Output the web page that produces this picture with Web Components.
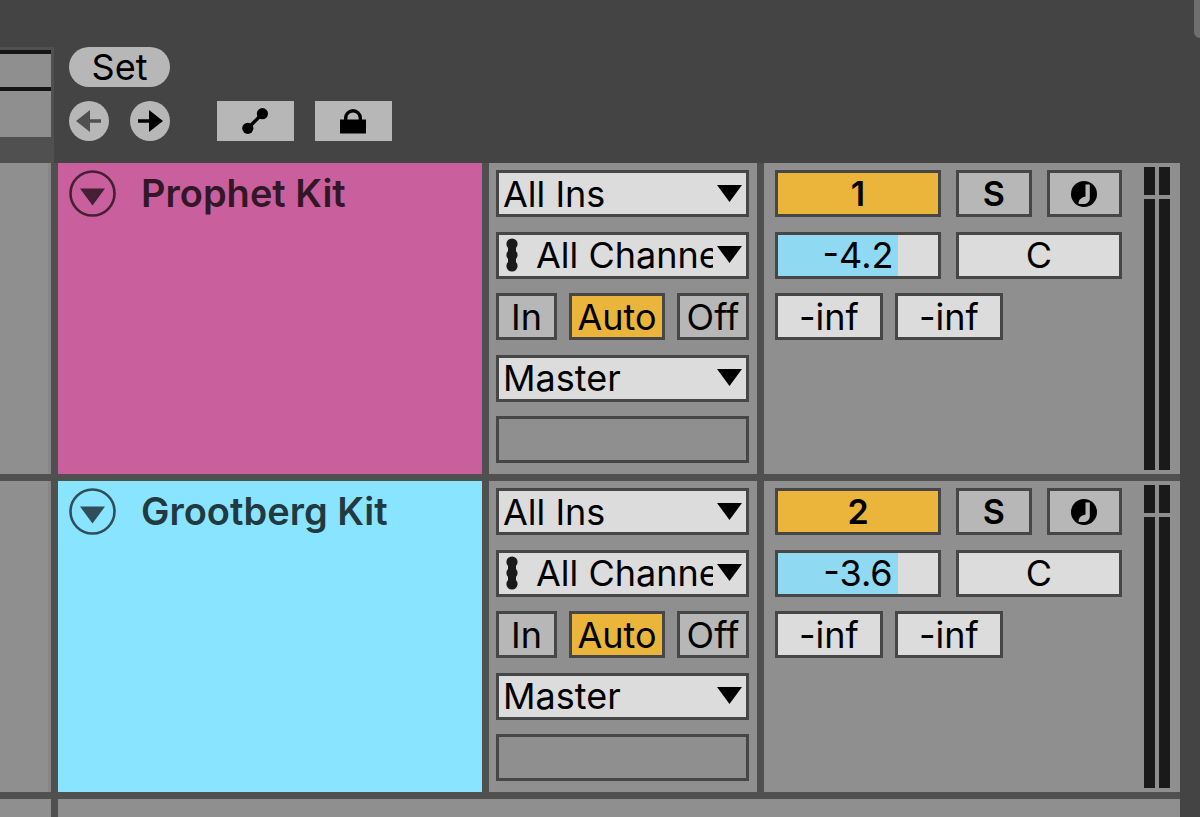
<!DOCTYPE html>
<html lang="en">
<head>
<meta charset="utf-8">
<meta name="viewport" content="width=device-width, initial-scale=1">
<title>Arrangement</title>
<style>
  :root {
    --bg: #444444;
    --line: #505050;
    --panel: #8f8f8f;
    --frame: #464646;
    --button: #b7b7b7;
    --field: #dcdcdc;
    --accent: #ebb53c;
    --level: #8fd9f3;
  }

  body {
    margin: 0;
    background: var(--bg);
    color: #000;
    font-family: Inter, "Liberation Sans", sans-serif;
    font-size: 36px;
    line-height: 40px;
  }
</style>
</head>
<body>
<arrangement-view>
  <locator-bar slot="header"></locator-bar>
  <track-row name="Prophet Kit" number="1" color="#c95f9d" volume="-4.2"></track-row>
  <track-row name="Grootberg Kit" number="2" color="#89e4ff" volume="-3.6"></track-row>
</arrangement-view>

<script>
/**
 * Base class: every component renders its template into an open shadow root
 */
class LiveElement extends HTMLElement {
  constructor() {
    super();
    this.attachShadow({ mode: 'open' });
  }

  connectedCallback() {
    this.shadowRoot.innerHTML = this.template();
  }

  attr(name, fallback = '') {
    return this.getAttribute(name) || fallback;
  }
}

/**
 * Page frame: header on top, tracks below, empty lane down to the window edge
 */
class ArrangementView extends LiveElement {
  template() {
    return `
      <style>
        :host {
          display: flex;
          flex-direction: column;
          height: 100vh;
          overflow: hidden;
        }

        main {
          display: flex;
          flex: 1;
          flex-direction: column;
          gap: 7px;
          margin-right: 20px;
          background: var(--line);
        }

        .rest {
          display: grid;
          grid-template-columns: 51px 1fr;
          gap: 7px;
          flex: 1;
        }

        .rest div {
          background: var(--panel);
        }
      </style>

      <slot name="header"></slot>
      <main>
        <slot></slot>
        <div class="rest"><div></div><div></div></div>
      </main>
    `;
  }
}

/**
 * Locator controls and the end of the overview strip
 */
class LocatorBar extends LiveElement {
  template() {
    return `
      <style>
        :host {
          display: flex;
          height: 163px;
        }

        .overview {
          box-sizing: border-box;
          width: 54px;
          margin-top: 47px;
          padding: 3px 3px 0 0;
          background: var(--line);
        }

        .beat, .scrub {
          box-sizing: border-box;
          background: var(--panel);
          border-top: 4px solid #141414;
        }

        .beat { height: 37px; }
        .scrub { height: 50px; }

        .controls {
          display: flex;
          flex: 1;
          flex-direction: column;
          align-items: flex-start;
          gap: 14px;
          padding: 47px 0 0 15px;
        }

        .row {
          display: flex;
          gap: 21px;
        }

        .tools {
          display: flex;
          gap: 21px;
          margin-left: 26px;
        }

        button {
          display: block;
          height: 40px;
          padding: 0;
          border: 0;
          background: var(--button);
          color: inherit;
          font: inherit;
        }

        button:disabled { color: #505050; }

        .set {
          width: 101px;
          border-radius: 20px;
        }

        .round {
          width: 40px;
          border-radius: 50%;
        }

        .tool { width: 77px; }

        svg {
          display: block;
          fill: currentColor;
        }

        .scroll {
          width: 6px;
          height: 38px;
          border-radius: 0 0 0 6px;
          background: #6f6f6f;
        }
      </style>

      <div class="overview">
        <div class="beat"></div>
        <div class="scrub"></div>
      </div>
      <div class="controls">
        <button class="set">Set</button>
        <div class="row">
          <button class="round" aria-label="Previous locator" disabled>
            <svg width="40" height="40"><path d="M7 20 21 9v9.2h11v3.6H21V31z"/></svg>
          </button>
          <button class="round" aria-label="Next locator">
            <svg width="40" height="40"><path d="M33 20 19 9v9.2H8v3.6h11V31z"/></svg>
          </button>
          <div class="tools">
            <button class="tool" aria-label="Automation mode">
              <svg width="76" height="40">
                <circle cx="30.8" cy="27.3" r="5.6"/>
                <circle cx="45.4" cy="12.7" r="5.6"/>
                <path d="M30.8 27.3 45.4 12.7" stroke="currentColor" stroke-width="3.4"/>
              </svg>
            </button>
            <button class="tool" aria-label="Lock envelopes">
              <svg width="76" height="40">
                <path d="M25 18.5h26v14H25z"/>
                <path d="M30.7 19v-2a7.3 7.3 0 0 1 14.6 0v2" fill="none" stroke="currentColor" stroke-width="3.4"/>
              </svg>
            </button>
          </div>
        </div>
      </div>
      <div class="scroll"></div>
    `;
  }
}

/**
 * Drop-down with a frame, arrow and optional leading icon from the slot
 */
class LiveChooser extends LiveElement {
  template() {
    const value = this.attr('value');
    const label = this.attr('label');
    const empty = value === '';

    return `
      <style>
        :host {
          display: grid;
          grid-template-columns: minmax(0, 1fr);
          align-items: center;
        }

        select, .arrow, slot {
          grid-area: 1 / 1;
        }

        select {
          appearance: none;
          box-sizing: border-box;
          width: 100%;
          height: 47px;
          margin: 0;
          padding: 0 33px 0 ${this.hasAttribute('icon') ? 37 : 4}px;
          border: 3px solid var(--frame);
          border-radius: 0;
          background: ${empty ? 'transparent' : 'var(--field)'};
          color: inherit;
          font: inherit;
          opacity: 1;
        }

        .arrow {
          justify-self: end;
          margin-right: 7px;
          pointer-events: none;
        }

        slot {
          display: block;
          pointer-events: none;
        }
      </style>

      <select aria-label="${label}" ${empty ? 'disabled' : ''}>${empty ? '' : `<option>${value}</option>`}</select>
      <slot></slot>
      ${empty ? '' : '<svg class="arrow" width="25" height="18"><path d="M0 0h25L12.5 17z"/></svg>'}
    `;
  }
}

/**
 * Track title, colored, with fold button
 */
class TrackTitle extends LiveElement {
  template() {
    return `
      <style>
        :host {
          display: flex;
          align-items: flex-start;
          gap: 25px;
          min-width: 0;
          padding: 7px 11px;
          background: ${this.attr('color')};
        }

        button {
          flex: none;
          padding: 0;
          border: 0;
          background: none;
          color: rgba(0, 0, 0, 0.66);
        }

        svg { display: block; }

        h2 {
          margin: 0;
          color: rgba(0, 0, 0, 0.77);
          font-size: 38px;
          font-weight: 600;
          line-height: 47px;
          white-space: nowrap;
        }
      </style>

      <button aria-label="Unfold track">
        <svg width="47" height="47">
          <circle cx="23.5" cy="23.5" r="22" fill="none" stroke="currentColor" stroke-width="2.6"/>
          <path d="M11 18.5h25L23.5 35.5z" fill="currentColor"/>
        </svg>
      </button>
      <h2><slot></slot></h2>
    `;
  }
}

/**
 * Input and output routing column
 */
class TrackRouting extends LiveElement {
  template() {
    return `
      <style>
        :host {
          display: grid;
          box-sizing: border-box;
          grid-template-rows: repeat(5, 47px);
          align-content: space-between;
          padding: 7px 8px 11px 7px;
          background: var(--panel);
        }

        .monitor {
          display: grid;
          grid-template-columns: 61px 1fr 72px;
          gap: 12px;
        }

        button {
          padding: 0;
          border: 3px solid var(--frame);
          background: var(--button);
          color: inherit;
          font: inherit;
        }

        button[aria-pressed="true"] { background: var(--accent); }

        .dots {
          display: block;
          margin-left: 10px;
          fill: #1a1a1a;
        }
      </style>

      <live-chooser label="Input type" value="All Ins"></live-chooser>
      <live-chooser label="Input channel" value="All Channels" icon>
        <svg class="dots" width="12" height="34">
          <circle cx="6" cy="6" r="5.6"/>
          <circle cx="6" cy="17" r="5.6"/>
          <circle cx="6" cy="28" r="5.6"/>
          <path d="M2 6h8v22H2z"/>
        </svg>
      </live-chooser>
      <div class="monitor" role="group" aria-label="Monitor">
        <button aria-pressed="false">In</button>
        <button aria-pressed="true">Auto</button>
        <button aria-pressed="false">Off</button>
      </div>
      <live-chooser label="Output type" value="Master"></live-chooser>
      <live-chooser label="Output channel"></live-chooser>
    `;
  }
}

/**
 * Mixer column: activator, solo, arm, volume, pan, sends
 */
class TrackMixer extends LiveElement {
  template() {
    return `
      <style>
        :host {
          display: flex;
          box-sizing: border-box;
          gap: 22px;
          padding: 0 10px 0 11px;
          background: var(--panel);
        }

        .controls {
          display: grid;
          flex: 1;
          min-width: 0;
          grid-template-rows: repeat(5, 47px);
          align-content: space-between;
          padding: 7px 0 11px;
        }

        .row, .pair {
          display: grid;
          grid-template-columns: 1fr 1fr;
          gap: 15px;
        }

        .sends {
          display: grid;
          grid-template-columns: 108px 108px;
          gap: 12px;
        }

        button, input {
          box-sizing: border-box;
          width: 100%;
          min-width: 0;
          height: 47px;
          margin: 0;
          padding: 0;
          border: 3px solid var(--frame);
          border-radius: 0;
          color: inherit;
          font: inherit;
          text-align: center;
        }

        button {
          background: var(--button);
          font-size: 34px;
          font-weight: 600;
        }

        input { background: var(--field); }

        .activator { background: var(--accent); }

        .volume {
          background: linear-gradient(to right, var(--level) 75%, var(--field) 75%);
        }

        svg {
          display: block;
          margin: 0 auto;
        }
      </style>

      <div class="controls">
        <div class="row">
          <button class="activator" aria-pressed="true">${this.attr('number')}</button>
          <div class="pair">
            <button>S</button>
            <button aria-label="Arm">
              <svg width="26" height="26">
                <circle cx="13" cy="13" r="13"/>
                <path d="M14.5 3.5h4.3v13.7c0 3.5-3 5.8-6.500 5.800H7.800c-.8-3.500 2-6.500 6.700-7.500z" fill="#b7b7b7"/>
              </svg>
            </button>
          </div>
        </div>
        <div class="row">
          <input class="volume" aria-label="Volume" value="${this.attr('volume')}">
          <input aria-label="Pan" value="C">
        </div>
        <div class="sends">
          <input aria-label="Send A" value="-inf">
          <input aria-label="Send B" value="-inf">
        </div>
      </div>
      <level-meter></level-meter>
    `;
  }
}

/**
 * Stereo meter with peak segment on top
 */
class LevelMeter extends LiveElement {
  template() {
    return `
      <style>
        :host {
          display: grid;
          grid-template-columns: 11px 11px;
          grid-template-rows: 28px 1fr;
          gap: 4px;
          padding: 4px 0;
        }

        i { background: #1a1a1a; }
      </style>
      <i></i><i></i><i></i><i></i>
    `;
  }
}

/**
 * One track: lane end, title, routing and mixer
 */
class TrackRow extends LiveElement {
  template() {
    return `
      <style>
        :host {
          display: grid;
          grid-template-columns: 51px minmax(0, 1fr) 268px 416px;
          gap: 7px;
          height: 311px;
          flex: none;
        }

        .lane {
          background: var(--panel);
          border-right: 3px solid #878787;
        }
      </style>

      <div class="lane"></div>
      <track-title color="${this.attr('color')}">${this.attr('name')}</track-title>
      <track-routing></track-routing>
      <track-mixer number="${this.attr('number')}" volume="${this.attr('volume')}"></track-mixer>
    `;
  }
}

customElements.define('live-chooser', LiveChooser);
customElements.define('level-meter', LevelMeter);
customElements.define('track-title', TrackTitle);
customElements.define('track-routing', TrackRouting);
customElements.define('track-mixer', TrackMixer);
customElements.define('track-row', TrackRow);
customElements.define('locator-bar', LocatorBar);
customElements.define('arrangement-view', ArrangementView);
</script>
</body>
</html>
